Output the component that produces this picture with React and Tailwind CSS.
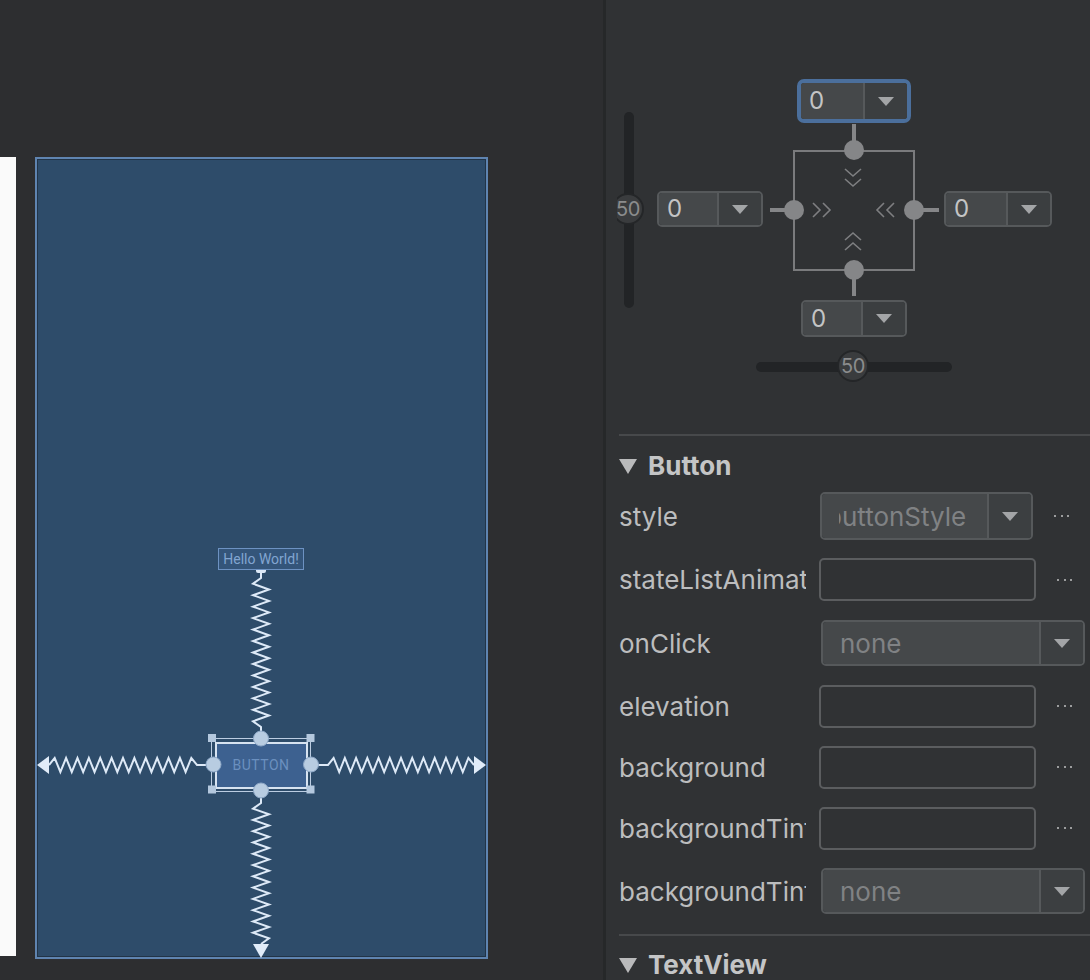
import React from "react";

const FONT = { fontFamily: "Inter, 'Noto Sans', sans-serif" };

// zigzag points between two points along one axis, as "L x y" segments
function zig(x0, y0, x1, y1, period = 11.4, amp = 7) {
  const horizontal = y0 === y1;
  const len = horizontal ? x1 - x0 : y1 - y0;
  const n = Math.max(2, Math.round(Math.abs(len) / (period / 2)));
  const step = len / n;
  let d = "";
  for (let i = 1; i < n; i++) {
    const off = i % 2 ? -amp : amp;
    d += horizontal ? ` L${x0 + step * i} ${y0 + off}` : ` L${x0 + off} ${y0 + step * i}`;
  }
  return d + ` L${x1} ${y1}`;
}

function Tri({ className = "w-[16px] h-[9px]" }) {
  return (
    <svg viewBox="0 0 16 9" className={className}>
      <polygon points="0,0 16,0 8,9" fill="#a3a5a7" />
    </svg>
  );
}

function SmallCombo({ value, ring }) {
  return (
    <div
      className={
        ring
          ? "flex h-full w-full rounded-[7px] border-4 border-[#4b6f9c] overflow-hidden"
          : "flex h-full w-full rounded-[5px] border-2 border-[#56595b] overflow-hidden"
      }
    >
      <div className="flex-1 bg-[#45484a] flex items-center pl-[8px] text-[24px] text-[#c3c4c5]">{value}</div>
      <div className="w-[44px] bg-[#3b3e40] border-l-2 border-[#56595b] flex items-center justify-center">
        <Tri />
      </div>
    </div>
  );
}

function Thumb({ className }) {
  return (
    <div
      className={`${className} absolute w-[32px] h-[32px] rounded-full bg-[#3a3c3e] border-2 border-[#242628] flex items-center justify-center text-[20px] tracking-[-0.5px] text-[#8b8c8d]`}
    >
      50
    </div>
  );
}

function ConstraintWidget() {
  const c = "#858688";
  return (
    <div className="relative ml-[11px] h-[436px] overflow-hidden">
      {/* vertical bias slider */}
      <div className="absolute left-[7px] top-[112px] w-[10px] h-[196px] rounded-full bg-[#222426]" />
      <Thumb className="left-[-5px] top-[193px]" />

      <svg className="absolute left-0 top-0" width="473" height="436" viewBox="0 0 473 436">
        <rect x="177" y="151" width="120" height="119" fill="none" stroke="#7a7b7d" strokeWidth="2" />
        <g stroke={c} strokeWidth="4">
          <line x1="237" y1="124" x2="237" y2="150" />
          <line x1="237" y1="270" x2="237" y2="296" />
          <line x1="153" y1="210" x2="177" y2="210" />
          <line x1="297" y1="210" x2="322" y2="210" />
        </g>
        <g fill={c}>
          <circle cx="237" cy="150" r="10" />
          <circle cx="177" cy="210" r="10" />
          <circle cx="297" cy="210" r="10" />
          <circle cx="237" cy="270" r="10" />
        </g>
        <g fill="none" stroke="#7e7f81" strokeWidth="1.6">
          <polyline points="228,169 236,176 244,169" />
          <polyline points="228,179 236,186 244,179" />
          <polyline points="228,240 236,233 244,240" />
          <polyline points="228,250 236,243 244,250" />
          <polyline points="196,203 203,210 196,217" />
          <polyline points="206,203 213,210 206,217" />
          <polyline points="267,203 260,210 267,217" />
          <polyline points="277,203 270,210 277,217" />
        </g>
      </svg>

      <div className="absolute left-[180px] top-[79px] w-[114px] h-[44px]">
        <SmallCombo value="0" ring />
      </div>
      <div className="absolute left-[40px] top-[191px] w-[106px] h-[36px]">
        <SmallCombo value="0" />
      </div>
      <div className="absolute left-[327px] top-[191px] w-[108px] h-[36px]">
        <SmallCombo value="0" />
      </div>
      <div className="absolute left-[184px] top-[300px] w-[106px] h-[37px]">
        <SmallCombo value="0" />
      </div>

      {/* horizontal bias slider */}
      <div className="absolute left-[139px] top-[362px] w-[196px] h-[10px] rounded-full bg-[#222426]" />
      <Thumb className="left-[220px] top-[350px]" />
    </div>
  );
}

function Dots() {
  return (
    <div className="flex gap-[4.5px] ml-[21px]">
      <span className="w-[2px] h-[2px] bg-[#9c9d9e]" />
      <span className="w-[2px] h-[2px] bg-[#9c9d9e]" />
      <span className="w-[2px] h-[2px] bg-[#9c9d9e]" />
    </div>
  );
}

function Field() {
  return <div className="w-[217px] h-[43px] rounded-[5px] border-2 border-[#5b5d5f]" />;
}

function Dropdown({ text, wide, shift }) {
  return (
    <div
      className={
        wide
          ? "ml-[2px] w-[264px] h-[46px] flex rounded-[5px] border-2 border-[#56595b] overflow-hidden"
          : "ml-[1px] w-[213px] h-[48px] flex rounded-[5px] border-2 border-[#56595b] overflow-hidden"
      }
    >
      <div className="flex-1 bg-[#45484a] flex items-center overflow-hidden pl-[17px]">
        <div className="overflow-hidden">
          <span
            className={
              shift
                ? "block -ml-[13px] whitespace-nowrap text-[26px] text-[#808284]"
                : "block whitespace-nowrap text-[26px] text-[#808284]"
            }
          >
            {text}
          </span>
        </div>
      </div>
      <div className="w-[44px] bg-[#3c3f41] border-l-2 border-[#56595b] flex items-center justify-center">
        <Tri />
      </div>
    </div>
  );
}

function Row({ label, h, children, dots }) {
  return (
    <div className={`flex items-center ${h}`}>
      <div className="w-[187px] shrink-0 overflow-hidden">
        <span className="block whitespace-nowrap text-[26px] text-[#bcbdbe]">{label}</span>
      </div>
      <div className="ml-[13px] flex items-center">
        {children}
        {dots && <Dots />}
      </div>
    </div>
  );
}

function SectionHeader({ title }) {
  return (
    <div className="flex items-center h-[30px] gap-[11px]">
      <svg viewBox="0 0 18 15" className="w-[18px] h-[15px]">
        <polygon points="0,0 18,0 9,15" fill="#b9babb" />
      </svg>
      <span className="text-[26px] font-bold text-[#c4c5c6] leading-[30px]">{title}</span>
    </div>
  );
}

function Canvas() {
  const line = "#dde9f7";
  return (
    <div className="relative w-[453px] h-[802px] border-2 border-[#5f84b0] bg-[#2e4c6a]">
      <div className="absolute inset-0 border border-[#223447]" />
      <svg className="absolute left-[-2px] top-[-2px]" width="453" height="802" viewBox="35 157 453 802">
        <g fill="none" stroke={line} strokeWidth="2" strokeLinejoin="miter">
          <path d={`M261 572 L261 578${zig(261, 578, 261, 727, 11.4, 8)} L261 732`} />
          <path d={`M206 765 L197 765${zig(197, 765, 49, 765)}`} />
          <path d={`M318 765 L328 765${zig(328, 765, 474, 765)}`} />
          <path d={`M261 798 L261 803${zig(261, 803, 261, 944, 11.4, 8)}`} />
        </g>
        <g fill="#e1ecf9">
          <polygon points="37,765 49,756 49,774" />
          <polygon points="486,765 474,756 474,774" />
          <polygon points="261,958 253,944 269,944" />
        </g>
        <rect x="256" y="563" width="10" height="10" rx="2" fill="#dce8f6" />
      </svg>

      {/* Hello World text view */}
      <div
        className="absolute left-[181px] top-[389px] w-[86px] h-[22px] border border-[#6d92c2] bg-[#34557a] flex items-center justify-center text-[14px] leading-none text-[#82a5d1]"
        style={{ fontFamily: "Roboto, sans-serif" }}
      >
        Hello World!
      </div>

      {/* button with selection frame */}
      <div className="absolute left-[174px] top-[579px] w-[100px] h-[54px] border-[1.5px] border-[#bccde2]">
        <div className="absolute left-[2.5px] top-[2.5px] right-[2.5px] bottom-[2.5px] border-2 border-[#d7e3f1] bg-[#3d6190] flex items-center justify-center">
          <span className="text-[14px] tracking-[0.5px] text-[#6b90bf]" style={{ fontFamily: "Roboto, sans-serif" }}>
            BUTTON
          </span>
        </div>
      </div>
      <svg className="absolute left-[-2px] top-[-2px]" width="453" height="802" viewBox="35 157 453 802">
        <g fill="#b4c8de">
          <rect x="208" y="734" width="8" height="8" />
          <rect x="306.5" y="734" width="8" height="8" />
          <rect x="208" y="785.5" width="8" height="8" />
          <rect x="306.5" y="785.5" width="8" height="8" />
        </g>
        <g fill="#b8cce1" stroke="#8ea8c7" strokeWidth="1">
          <circle cx="261" cy="738.5" r="7.5" />
          <circle cx="213.5" cy="764.5" r="7.5" />
          <circle cx="311" cy="764.5" r="7.5" />
          <circle cx="261" cy="790.5" r="7.5" />
        </g>
      </svg>
    </div>
  );
}

export default function App() {
  return (
    <div className="flex w-[1090px] h-[980px] overflow-hidden bg-[#2d2e30]" style={FONT}>
      {/* design surface */}
      <div className="w-[603px] shrink-0 pt-[157px] flex items-start">
        <div className="w-[16px] h-[799px] bg-[#fafafa]" />
        <div className="ml-[19px]">
          <Canvas />
        </div>
      </div>
      <div className="w-[3px] shrink-0 bg-[#262829]" />

      {/* attributes panel */}
      <div className="flex-1 bg-[#303234] flex flex-col">
        <ConstraintWidget />
        <div className="ml-[13px] border-t-2 border-[#47494b]" />
        <div className="pl-[13px]">
          <div className="pt-[15px] h-[48px]">
            <SectionHeader title="Button" />
          </div>
          <Row label="style" h="h-[64px]" dots>
            <Dropdown text="buttonStyle" shift />
          </Row>
          <Row label="stateListAnimator" h="h-[63px]" dots>
            <Field />
          </Row>
          <Row label="onClick" h="h-[64px]">
            <Dropdown text="none" wide />
          </Row>
          <Row label="elevation" h="h-[62px]" dots>
            <Field />
          </Row>
          <Row label="background" h="h-[60px]" dots>
            <Field />
          </Row>
          <Row label="backgroundTint" h="h-[62px]" dots>
            <Field />
          </Row>
          <Row label="backgroundTintMode" h="h-[64px]">
            <Dropdown text="none" wide />
          </Row>
          <div className="mt-[11px] border-t-2 border-[#47494b]" />
          <div className="pt-[14px]">
            <SectionHeader title="TextView" />
          </div>
        </div>
      </div>
    </div>
  );
}
